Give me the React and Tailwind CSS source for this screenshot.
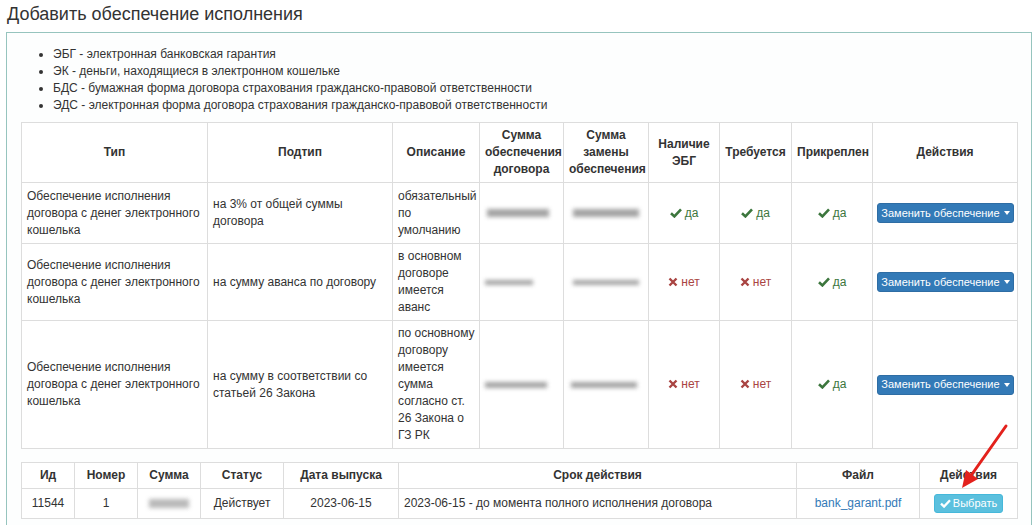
import React from "react";

const Check = () => (
  <svg width="12" height="10" viewBox="0 0 12 10" className="inline-block mr-[3px] align-[-1px]">
    <path d="M1 5.2 L4.4 8.4 L11 1.4" fill="none" stroke="#3c763d" strokeWidth="2.6" />
  </svg>
);

const Cross = () => (
  <svg width="10" height="10" viewBox="0 0 10 10" className="inline-block mr-[3px] align-[-1px]">
    <path d="M1.5 1.5 L8.5 8.5 M8.5 1.5 L1.5 8.5" fill="none" stroke="#a94442" strokeWidth="2.4" />
  </svg>
);

const Yes = () => (
  <span className="text-[#3c763d]">
    <Check />да
  </span>
);
const No = () => (
  <span className="text-[#a94442]">
    <Cross />нет
  </span>
);

const Blur = ({ w, h = 7, ml = 0 }) => (
  <div className="relative h-[40px] flex items-center">
    <div
      className="bg-[#9a9a9a] blur-[2px] opacity-90"
      style={{ width: w, height: h, marginLeft: ml }}
    />
  </div>
);

const ReplaceBtn = () => (
  <button className="inline-flex items-center h-[20px] w-[137px] justify-center rounded-[3px] bg-[#337ab7] border border-[#2e6da4] text-white text-[11px] leading-none">
    Заменить обеспечение
    <span className="ml-[4px] inline-block w-0 h-0 border-l-[3.5px] border-r-[3.5px] border-t-[4px] border-l-transparent border-r-transparent border-t-white" />
  </button>
);

const th = "border border-[#dddddd] px-[5px] py-[4px] font-bold text-center align-middle";
const td = "border border-[#dddddd] px-[5px] py-[4px] align-middle";

const rows = [
  {
    type: "Обеспечение исполнения договора с денег электронного кошелька",
    sub: "на 3% от общей суммы договора",
    desc: ["обязательный", "по", "умолчанию"],
    s1: { w: 62, h: 8, ml: 2 },
    s2: { w: 66, h: 8, ml: 4 },
    ebg: true,
    req: true,
    h: "h-[61px]",
  },
  {
    type: "Обеспечение исполнения договора с денег электронного кошелька",
    sub: "на сумму аванса по договору",
    desc: ["в основном", "договоре", "имеется", "аванс"],
    s1: { w: 48, h: 5, ml: 0 },
    s2: { w: 66, h: 5, ml: 4 },
    ebg: false,
    req: false,
    h: "h-[75px]",
  },
  {
    type: "Обеспечение исполнения договора с денег электронного кошелька",
    sub: "на сумму в соответствии со статьей 26 Закона",
    desc: ["по основному", "договору", "имеется", "сумма", "согласно ст.", "26 Закона о", "ГЗ РК"],
    s1: { w: 62, h: 6, ml: 0 },
    s2: { w: 66, h: 6, ml: 2 },
    ebg: false,
    req: false,
    h: "h-[127px]",
  },
];

export default function App() {
  return (
    <div
      className="relative pl-[6px] pr-[2px] text-[12px] leading-[17px] text-[#333333] bg-white min-h-[525px]"
      style={{ fontFamily: '"Liberation Sans", Arial, sans-serif' }}
    >
      <div className="h-[32px] pt-[4px] text-[18px] leading-[20px] pl-[1px]">
        Добавить обеспечение исполнения
      </div>

      <div className="border border-[#96c4be] bg-[#fdfefe] px-[14px] pt-[13px] pb-[15px]">
        <ul className="list-disc pl-[32px] mb-[8px]">
          <li>ЭБГ - электронная банковская гарантия</li>
          <li>ЭК - деньги, находящиеся в электронном кошельке</li>
          <li>БДС - бумажная форма договора страхования гражданско-правовой ответственности</li>
          <li>ЭДС - электронная форма договора страхования гражданско-правовой ответственности</li>
        </ul>

        <table className="w-[996px] border-collapse table-fixed bg-white">
          <colgroup>
            <col className="w-[186px]" />
            <col className="w-[185px]" />
            <col className="w-[87px]" />
            <col className="w-[84px]" />
            <col className="w-[85px]" />
            <col className="w-[71px]" />
            <col className="w-[72px]" />
            <col className="w-[81px]" />
            <col className="w-[145px]" />
          </colgroup>
          <thead>
            <tr className="h-[60px]">
              <th className={th}>Тип</th>
              <th className={th}>Подтип</th>
              <th className={th}>Описание</th>
              <th className={th}>Сумма обеспечения договора</th>
              <th className={th}>Сумма замены обеспечения</th>
              <th className={th}>Наличие ЭБГ</th>
              <th className={th}>Требуется</th>
              <th className={th}>Прикреплен</th>
              <th className={th}>Действия</th>
            </tr>
          </thead>
          <tbody>
            {rows.map((r, i) => (
              <tr key={i} className={r.h}>
                <td className={td}>{r.type}</td>
                <td className={td}>{r.sub}</td>
                <td className={td + " whitespace-nowrap"}>
                  {r.desc.map((l, j) => (
                    <div key={j}>{l}</div>
                  ))}
                </td>
                <td className={td}>
                  <Blur {...r.s1} />
                </td>
                <td className={td}>
                  <Blur {...r.s2} />
                </td>
                <td className={td + " text-center"}>{r.ebg ? <Yes /> : <No />}</td>
                <td className={td + " text-center"}>{r.req ? <Yes /> : <No />}</td>
                <td className={td + " text-center"}>
                  <Yes />
                </td>
                <td className={td + " text-center pl-[4px] pr-[3px]"}>
                  <ReplaceBtn />
                </td>
              </tr>
            ))}
          </tbody>
        </table>

        <table className="mt-[13px] w-[996px] border-collapse table-fixed bg-white">
          <colgroup>
            <col className="w-[53px]" />
            <col className="w-[63px]" />
            <col className="w-[63px]" />
            <col className="w-[83px]" />
            <col className="w-[115px]" />
            <col className="w-[398px]" />
            <col className="w-[123px]" />
            <col className="w-[98px]" />
          </colgroup>
          <thead>
            <tr className="h-[26px]">
              <th className={th + " py-[3px]"}>Ид</th>
              <th className={th + " py-[3px]"}>Номер</th>
              <th className={th + " py-[3px]"}>Сумма</th>
              <th className={th + " py-[3px]"}>Статус</th>
              <th className={th + " py-[3px]"}>Дата выпуска</th>
              <th className={th + " py-[3px]"}>Срок действия</th>
              <th className={th + " py-[3px]"}>Файл</th>
              <th className={th + " py-[3px]"}>Действия</th>
            </tr>
          </thead>
          <tbody>
            <tr className="h-[30px]">
              <td className={td + " text-center"}>11544</td>
              <td className={td + " text-center"}>1</td>
              <td className={td}>
                <div className="flex justify-center">
                  <div className="w-[40px] h-[9px] bg-[#a8a8a8] blur-[2px] opacity-80" />
                </div>
              </td>
              <td className={td + " text-center"}>Действует</td>
              <td className={td + " text-center"}>2023-06-15</td>
              <td className={td}>2023-06-15 - до момента полного исполнения договора</td>
              <td className={td + " text-center"}>
                <span className="text-[#337ab7]">bank_garant.pdf</span>
              </td>
              <td className={td + " text-center"}>
                <button className="inline-flex items-center h-[19px] px-[5px] rounded-[3px] bg-[#5bc0de] border border-[#46b8da] text-white text-[11px] leading-none">
                  <svg width="11" height="9" viewBox="0 0 12 10" className="mr-[2px]">
                    <path d="M1 5.2 L4.4 8.4 L11 1.4" fill="none" stroke="white" strokeWidth="2.6" />
                  </svg>
                  Выбрать
                </button>
              </td>
            </tr>
          </tbody>
        </table>
      </div>

      <svg
        className="absolute left-[940px] top-[420px] pointer-events-none"
        width="80"
        height="90"
        viewBox="0 0 80 90"
      >
        <line x1="66" y1="6" x2="30" y2="57" stroke="#e3211c" strokeWidth="3" strokeLinecap="round" />
        <polygon points="22,68 26,50 38,59" fill="#e3211c" />
      </svg>
    </div>
  );
}
